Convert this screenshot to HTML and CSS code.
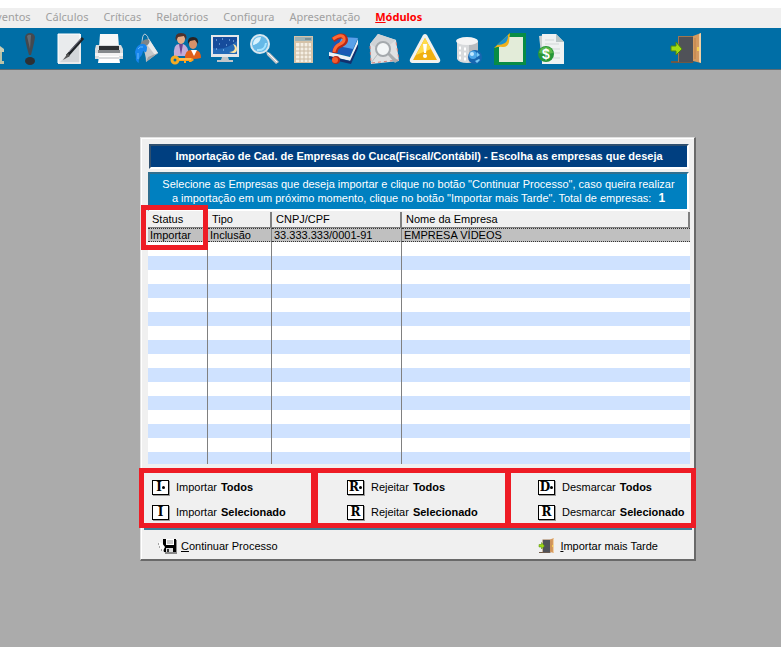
FILE: index.html
```html
<!DOCTYPE html>
<html lang="pt-BR">
	<head>
		<meta charset="UTF-8">
		<title>Importação de Empresas</title>
		<link rel="stylesheet" href="styles.css">
	</head>
	<body>
		<nav id="menu">
			<a href="#">Eventos</a>
			<a href="#">Cálculos</a>
			<a href="#">Críticas</a>
			<a href="#">Relatórios</a>
			<a href="#">Configura</a>
			<a href="#">Apresentação</a>
			<a href="#" class="active"><u>M</u>ódulos</a>
		</nav>

		<div id="toolbar">
			<div class="group">
				<button aria-label="Banco">
					<svg viewBox="0 0 32 32"><path d="M2 16 16 6l13 10v3H2z" fill="#c9cdb4"/><path d="M5 19h4v10H5zM14 19h4v10h-4zM23 19h4v10h-4zM2 28h27v3H2z" fill="#b9c2a8"/></svg>
				</button>
				<button aria-label="Avisos">
					<svg viewBox="0 0 32 32">
						<path d="M11 4Q12 0 16 0t5 4q0 3-4 18h-2Q11 8 11 4z" fill="#44494f"/>
						<ellipse cx="16" cy="28" rx="5" ry="4" fill="#2d3034"/>
						<path d="M13 3q2-2 4-1l-1 14z" fill="#656b72"/>
					</svg>
				</button>
				<button aria-label="Editar">
					<svg viewBox="0 0 32 32">
						<path d="M5 1h23v30H5z" fill="#e9ebed"/>
						<path d="M5 31 28 8v23z" fill="#d3d6d9"/>
						<path d="M5 1h22v29H5z" fill="none" stroke="#fff"/>
						<path d="M30 5 14 23" stroke="#1e2226" stroke-width="3"/>
						<path d="m15 20-5 7 7-4z" fill="#555"/>
						<path d="m28 6-12 13" stroke="#778" stroke-width="1"/>
					</svg>
				</button>
				<button aria-label="Imprimir">
					<svg viewBox="0 0 32 32">
						<path d="M8 1h18l1 13H7z" fill="#f7f7f7"/>
						<path d="M4 12h25l2 4v10H3V16z" fill="#d9dbdd"/>
						<path d="M7 13h20v4H7z" fill="#2e3033"/>
						<path d="M6 17h22v3H6z" fill="#85898c"/>
						<path d="M3 20h28v3H3z" fill="#f3f3f3"/>
						<path d="M7 23h20l1 7H6z" fill="#fff"/>
						<path d="M7 25h20" stroke="#b5b8bb"/>
					</svg>
				</button>
				<button aria-label="Pintar">
					<svg viewBox="0 0 32 32">
						<path d="M11 12Q11 1 14 1q3 1 4 7" fill="none" stroke="#b9cbd6"/>
						<path d="m10 11 8-5 9 14-12 9q0-9-5-18z" fill="#c6c8ca"/>
						<path d="m18 6 9 14-3 2L14 9z" fill="#e9eaeb"/>
						<path d="m17 24 10-4-12 9z" fill="#9ea2a5"/>
						<ellipse cx="14" cy="10" rx="5" ry="3" transform="rotate(-32 14 10)" fill="#7d8488"/>
						<path d="M10 11q4-1 6 3 0 6-2 5l-2-1q-1 5-3 6-2 4-1 6-4-2-3-6l-1-5q1-6 6-8z" fill="#1785ed"/>
						<path d="M7 16q2-3 5-2M7 20v6" fill="none" stroke="#68bcff"/>
					</svg>
				</button>
				<button aria-label="Usuários">
					<svg viewBox="0 0 32 32">
						<path d="M4 23q-1-12 5-12h4q5 1 6 12z" fill="#c4acd8"/>
						<path d="m9 11 2 11 2-11z" fill="#6c438f"/>
						<ellipse cx="11" cy="6" rx="4" ry="5" fill="#e7ad87"/>
						<path d="M6 8Q4 0 11 0t5 7l-2-4-6 1z" fill="#4e312c"/>
						<path d="M15 25q0-8 6-8h5q5 1 5 8-8 2-16 0z" fill="#e0601a"/>
						<path d="m21 17 3 6 3-6z" fill="#fff"/>
						<ellipse cx="23" cy="11" rx="4" ry="5" fill="#d7926a"/>
						<path d="M18 11q-1-7 5-7t5 7l-3-4-5 1z" fill="#292323"/>
						<circle cx="5" cy="27" r="3" fill="none" stroke="#f7ab22" stroke-width="3"/>
						<path d="M8 25h14l2 2-3 2h-2v-1h-3v2h-2v-2H8z" fill="#ffa51e"/>
						<path d="M9 26h12" stroke="#ffd480"/>
					</svg>
				</button>
				<button aria-label="Monitor">
					<svg viewBox="0 0 32 32">
						<path d="M2 2h28v22H2z" fill="#e4e7e9"/>
						<path d="M4 4h24v17H4z" fill="#164c9c"/>
						<path d="M4 15q12 3 24-7v13H4z" fill="#2369b6"/>
						<path d="M24 11q5 7-4 8 8 3 8-3 0-4-4-5z" fill="#ffe6a0"/>
						<path d="M7 7h1M13 6h1M20 7h1M10 11h1M17 12h1M7 16h1M14 17h1M24 8h1" stroke="#a9d6ff"/>
						<path d="M13 24h6l1 3h4v2H8v-2h4z" fill="#c2c6c9"/>
					</svg>
				</button>
				<button aria-label="Pesquisar">
					<svg viewBox="0 0 32 32">
						<path d="m18 18 4 2 9 9-3 2-9-9z" fill="#c4c6c8"/>
						<path d="m20 20 9 9" stroke="#fff" stroke-width="1"/>
						<circle cx="12" cy="11" r="9" fill="#66b9e7" stroke="#d9e7ef" stroke-width="2"/>
						<path d="M5 12Q5 4 13 4q-1 7-8 8z" fill="#d8f3ff"/>
						<path d="M9 17q8 1 9-7" fill="none" stroke="#a6e4ff" stroke-width="2"/>
					</svg>
				</button>
				<button aria-label="Calculadora">
					<svg viewBox="0 0 32 32">
						<path d="M7 3h19v27H7z" fill="#d6c3a8"/>
						<path d="M8 4h17v4H8z" fill="#9eb2b5"/>
						<path d="M18 6h6" stroke="#586f77"/>
						<path d="M9 10h15v19H9z" fill="#f5efe4"/>
						<path d="M9 14h15M9 18h15M9 22h15M9 26h15M13 10v19M17 10v19M21 10v19" stroke="#cbbba4"/>
					</svg>
				</button>
			</div>
			<div class="group wide">
				<button aria-label="Ajuda">
					<svg viewBox="0 0 32 32">
						<path d="m11 3 20 2-8 18-21-4z" fill="#1b59b5"/>
						<path d="m15 4 16 1-5 11-15-3z" fill="#5aa1e9"/>
						<path d="m2 19 21 5 8-18v6l-7 16L2 23z" fill="#eef1f6"/>
						<path d="m2 23 21 5 8-17v4l-7 16-22-5z" fill="#12306e"/>
						<path d="M6 7q9-7 12-2 2 4-4 7-6 2-6 8" fill="none" stroke="#b72818" stroke-width="5"/>
						<path d="M6 6q9-6 11-1 1 4-4 6-5 2-6 8" fill="none" stroke="#ff6a35" stroke-width="3"/>
						<circle cx="9" cy="27" r="4" fill="#b72818"/>
						<circle cx="8" cy="27" r="3" fill="#f45c2d"/>
					</svg>
				</button>
				<button aria-label="Consultar correio">
					<svg viewBox="0 0 32 32">
						<path d="m2 11 8-10 18 6 3 21-28 3z" fill="#dfe1e3"/>
						<path d="m2 11 8-10 18 6-14 11z" fill="#d0d3d6"/>
						<path d="m3 30 9-12m18 10-13-9" fill="none" stroke="#b9bdc0"/>
						<path d="m2 13 1 17 28-3-3-18" fill="none" stroke="#d98178" stroke-dasharray="3 3"/>
						<path d="m19 21 3-1 8 8-3 2z" fill="#a9adb0"/>
						<circle cx="15" cy="16" r="7" fill="#f3f6f7" stroke="#a4a9ad" stroke-width="2"/>
					</svg>
				</button>
				<button aria-label="Alerta">
					<svg viewBox="0 0 32 32">
						<path d="M14 2q2-2 4 0l13 24q1 3-2 4H3q-3-1-2-4z" fill="#f2f2ef"/>
						<path d="m16 5 12 22H4z" fill="#f0b010"/>
						<path d="m16 5 6 11-15 6z" fill="#ffdb4c"/>
						<path d="M14 11h4l-1 9h-2z" fill="#fff"/>
						<circle cx="16" cy="23" r="2" fill="#fff"/>
					</svg>
				</button>
			</div>
			<div class="group wide data">
				<button aria-label="Banco de dados">
					<svg viewBox="0 0 32 32">
						<path d="M4 8v18q2 4 10 4 9 0 11-4V8z" fill="#d8dadc"/>
						<path d="M16 12q6 0 9-3v18q-4 3-9 3z" fill="#b9bcbf"/>
						<ellipse cx="14" cy="8" rx="11" ry="4" fill="#f4f4f4"/>
						<path d="M6 15h2M11 16h2M6 20h2M11 21h2M6 25h2M11 26h2" stroke="#fff" stroke-width="3"/>
						<circle cx="22" cy="24" r="7" fill="#1766b0"/>
						<circle cx="20" cy="22" r="4" fill="#4fa8e8"/>
						<path d="m24 19 3 3-3 2zM22 28l4-2 1 1-3 3z" fill="#79c9f5"/>
						<circle cx="19" cy="21" r="2" fill="#c2e8ff"/>
					</svg>
				</button>
				<button aria-label="Modelo">
					<svg viewBox="0 0 32 32">
						<path d="M16 0h16v32H0V15z" fill="#078c45"/>
						<path d="M15 4h14v25H5V14z" fill="#e3ecd9"/>
						<path d="M16 0 0 15q5-2 9-1 5 0 6-5z" fill="#f0b01c"/>
						<path d="M14 2 3 12q5 0 8-2t3-8z" fill="#168fd0"/>
					</svg>
				</button>
				<button aria-label="Financeiro">
					<svg viewBox="0 0 32 32">
						<path d="m4 3 17-2 5 25-19 3z" fill="#cbd1d1"/>
						<path d="M7 1h14l8 8v22H7z" fill="#eff2f2"/>
						<path d="M21 1v8h8z" fill="#bac5c5"/>
						<path d="M10 7h9M10 11h14M17 16h8M19 20h6M18 25h7" stroke="#d1d7d7"/>
						<circle cx="11" cy="21" r="8" fill="#269638"/>
						<path d="M4 20q1-6 7-6t7 6q-7 2-14 0z" fill="#5db94c"/>
						<text x="11" y="26" class="money">$</text>
					</svg>
				</button>
			</div>
			<button class="exit" aria-label="Sair">
				<svg viewBox="0 0 32 32"><use href="#door"/></svg>
			</button>
		</div>

		<main>
			<div id="dialog">
				<h1>Importação de Cad. de Empresas do Cuca(Fiscal/Contábil) - Escolha as empresas que deseja</h1>
				<p id="info">
					Selecione as Empresas que deseja importar e clique no botão "Continuar Processo", caso queira realizar<br>
					a importação em um próximo momento, clique no botão "Importar mais Tarde". Total de empresas: <b>1</b>
				</p>

				<div id="list">
					<table>
						<colgroup>
							<col class="c-status">
							<col class="c-tipo">
							<col class="c-cnpj">
							<col>
						</colgroup>
						<thead>
							<tr><th>Status</th><th>Tipo</th><th>CNPJ/CPF</th><th>Nome da Empresa</th></tr>
						</thead>
						<tbody>
							<tr class="selected"><td>Importar</td><td>Inclusão</td><td>33.333.333/0001-91</td><td>EMPRESA VÍDEOS</td></tr>
							<tr><td></td><td></td><td></td><td></td></tr>
							<tr><td></td><td></td><td></td><td></td></tr>
							<tr><td></td><td></td><td></td><td></td></tr>
							<tr><td></td><td></td><td></td><td></td></tr>
							<tr><td></td><td></td><td></td><td></td></tr>
							<tr><td></td><td></td><td></td><td></td></tr>
							<tr><td></td><td></td><td></td><td></td></tr>
							<tr><td></td><td></td><td></td><td></td></tr>
							<tr><td></td><td></td><td></td><td></td></tr>
							<tr><td></td><td></td><td></td><td></td></tr>
							<tr><td></td><td></td><td></td><td></td></tr>
							<tr><td></td><td></td><td></td><td></td></tr>
							<tr><td></td><td></td><td></td><td></td></tr>
							<tr><td></td><td></td><td></td><td></td></tr>
							<tr><td></td><td></td><td></td><td></td></tr>
							<tr class="last"><td></td><td></td><td></td><td></td></tr>
						</tbody>
					</table>
					<div class="mark"></div>
				</div>

				<div id="actions">
					<div class="box">
						<button><span class="key">I<i></i></span>Importar <b>Todos</b></button>
						<button><span class="key">I</span>Importar <b>Selecionado</b></button>
					</div>
					<div class="box">
						<button><span class="key">R<i></i></span>Rejeitar <b>Todos</b></button>
						<button><span class="key">R</span>Rejeitar <b>Selecionado</b></button>
					</div>
					<div class="box">
						<button><span class="key">D<i></i></span>Desmarcar <b>Todos</b></button>
						<button><span class="key">R</span>Desmarcar <b>Selecionado</b></button>
					</div>
				</div>

				<div id="footer">
					<button>
						<svg viewBox="0 0 19 16">
							<path d="M6 2h13v14H7z" fill="#888"/>
							<path d="M5 1h13v13H6l-1-3z" fill="#000"/>
							<path d="M8 1h8v6H8z" fill="#fff"/>
							<path d="M9 3h6M9 5h6" stroke="#999"/>
							<path d="M8 10h7v4H8z" fill="#ddd"/>
							<path d="M9 11h2v3H9z" fill="#333"/>
							<path d="m1 4 3 1 3 4-2 4-3-2z" fill="#fff"/>
							<path d="M0 6h1M1 9h1M3 12h1" stroke="#555"/>
						</svg>
						<span><u>C</u>ontinuar Processo</span>
					</button>
					<button>
						<svg viewBox="0 0 32 32">
							<g id="door">
								<path d="M1 28h22v2H1z" fill="#6d5946"/>
								<path d="M8 3h16v26H8z" fill="#9e7650"/>
								<path d="M9 4h15v25H9z" fill="#505258"/>
								<path d="m23 3 8-3v30l-8-2z" fill="#d59a60"/>
								<path d="m29 1 2-1v30l-2-1z" fill="#f0cfa4"/>
								<path d="M25 5v21" stroke="#bd8048"/>
								<path d="M27 14h2v4h-2z" fill="#f5ce52"/>
								<path d="M1 13h5V9l6 7-6 6v-4H1z" fill="#a2dc12" stroke="#4e8710"/>
							</g>
						</svg>
						<span><u>I</u>mportar mais Tarde</span>
					</button>
				</div>
			</div>
		</main>
	</body>
</html>
```
FILE: styles.css
```css
* {
	box-sizing: border-box;
	margin: 0;
	padding: 0;
}

body {
	min-height: 100vh;
	padding-top: 8px;
	background: linear-gradient(#fff 8px, #ababab 8px);
	font-family: "Liberation Sans", Arial, sans-serif;
	font-size: 11px;
	color: #000;
	overflow-x: hidden;
}

button {
	border: 0;
	background: none;
	font: inherit;
	color: inherit;
}

svg {
	display: block;
	flex: none;
}

/* menu */
#menu {
	display: flex;
	gap: 15px;
	height: 20px;
	margin-left: -10px;
	background: #efefef;
	font-family: "Noto Sans", sans-serif;
	font-size: 11px;
	line-height: 18px;
}

#menu a {
	color: #a0a0a0;
	text-decoration: none;
}

#menu .active {
	color: #f00;
	font-weight: bold;
}

/* toolbar */
#toolbar {
	display: flex;
	align-items: center;
	height: 42px;
	margin-left: -25px;
	background: #006ea6;
	border-bottom: 1px solid #5d6b73;
}

#toolbar .group {
	display: flex;
	gap: 7px;
	margin-right: 8px;
}

#toolbar .wide {
	gap: 9px;
	margin-right: 12px;
}

#toolbar .data {
	margin-right: 103px;
}

#toolbar svg {
	width: 32px;
	height: 32px;
}

.money {
	font-size: 14px;
	font-weight: bold;
	fill: #fff;
	text-anchor: middle;
}

/* dialog */
main {
	padding: 67px 85px 86px 140px;
}

#dialog {
	background: #f0f0f0;
	border: 1px solid #e0e0e0;
	border-right: 2px solid #696969;
	border-bottom: 2px solid #696969;
	box-shadow: inset 1px 1px #fff;
}

#dialog h1 {
	height: 25px;
	margin: 6px 5px 3px 8px;
	border: 2px solid #fff;
	border-top-color: #30506f;
	border-left-color: #30506f;
	background: #003f80;
	color: #fff;
	font-size: 11px;
	line-height: 20px;
	text-align: center;
	white-space: nowrap;
}

#info {
	height: 39px;
	margin: 0 5px 1px 7px;
	padding-top: 3px;
	border: 2px solid #fff;
	border-top-color: #306f8f;
	border-left-color: #306f8f;
	background: #0080c0;
	color: #fff;
	line-height: 14px;
	text-align: center;
	white-space: nowrap;
}

#info b {
	margin-left: 4px;
	font-size: 12px;
}

/* list */
#list {
	position: relative;
	margin: 0 4px 4px 7px;
}

#list table {
	width: 100%;
	table-layout: fixed;
	border-collapse: separate;
	border-spacing: 0;
	background: #fff;
}

.c-status {
	width: 60px;
}

.c-tipo {
	width: 64px;
}

.c-cnpj {
	width: 130px;
}

#list th {
	height: 16px;
	padding-left: 4px;
	border-right: 2px solid #808080;
	border-bottom: 1px solid #808080;
	background: #f0f0f0;
	font-weight: normal;
	line-height: 15px;
	text-align: left;
}

#list td {
	height: 14px;
	padding-left: 2px;
	border-right: 1px solid #808080;
	line-height: 12px;
	white-space: nowrap;
}

#list td:last-child {
	border-right: 0;
}

#list tr:nth-child(odd) td {
	background: #cfe2ff;
}

#list .selected td,
#list tr.selected:nth-child(odd) td {
	border-top: 1px dotted #333;
	border-bottom: 1px dotted #333;
	background: #c0c0c0;
}

#list tr.last td {
	height: 12px;
}

#list .mark {
	position: absolute;
	top: -7px;
	left: -7px;
	width: 67px;
	height: 45px;
	border: 5px solid #ee1c25;
}

/* actions */
#actions {
	display: grid;
	grid-template-columns: 175fr 194fr 188fr;
	margin: 0 -2px;
}

.box {
	display: grid;
	grid-template-rows: 25px 25px;
	justify-content: start;
	align-items: end;
	padding-left: 8px;
	border: 5px solid #ee1c25;
	border-right-width: 3px;
}

.box + .box {
	padding-left: 29px;
	border-left-width: 4px;
}

.box:last-child {
	padding-left: 27px;
	border-left-width: 3px;
	border-right-width: 5px;
}

.box button {
	display: flex;
	align-items: center;
	height: 22px;
	white-space: nowrap;
}

.box b {
	margin-left: 4px;
}

.key {
	display: flex;
	justify-content: center;
	align-items: center;
	width: 17px;
	height: 15px;
	margin-right: 7px;
	border: 1px solid #000;
	background: #fff;
	box-shadow: 1px 1px #999;
	font-family: "DejaVu Serif", serif;
	font-size: 12px;
	font-weight: bold;
	line-height: 13px;
}

.key i {
	width: 3px;
	height: 3px;
	border-radius: 2px;
	background: #000;
}

/* footer */
#footer {
	display: flex;
	justify-content: space-between;
	align-items: center;
	height: 31px;
	margin: 0 2px 0 3px;
	padding: 2px 34px 0 14px;
	border-top: 2px solid #3e7d98;
}

#footer button {
	display: flex;
	align-items: center;
	gap: 4px;
}

#footer svg {
	width: 19px;
	height: 16px;
}
```
